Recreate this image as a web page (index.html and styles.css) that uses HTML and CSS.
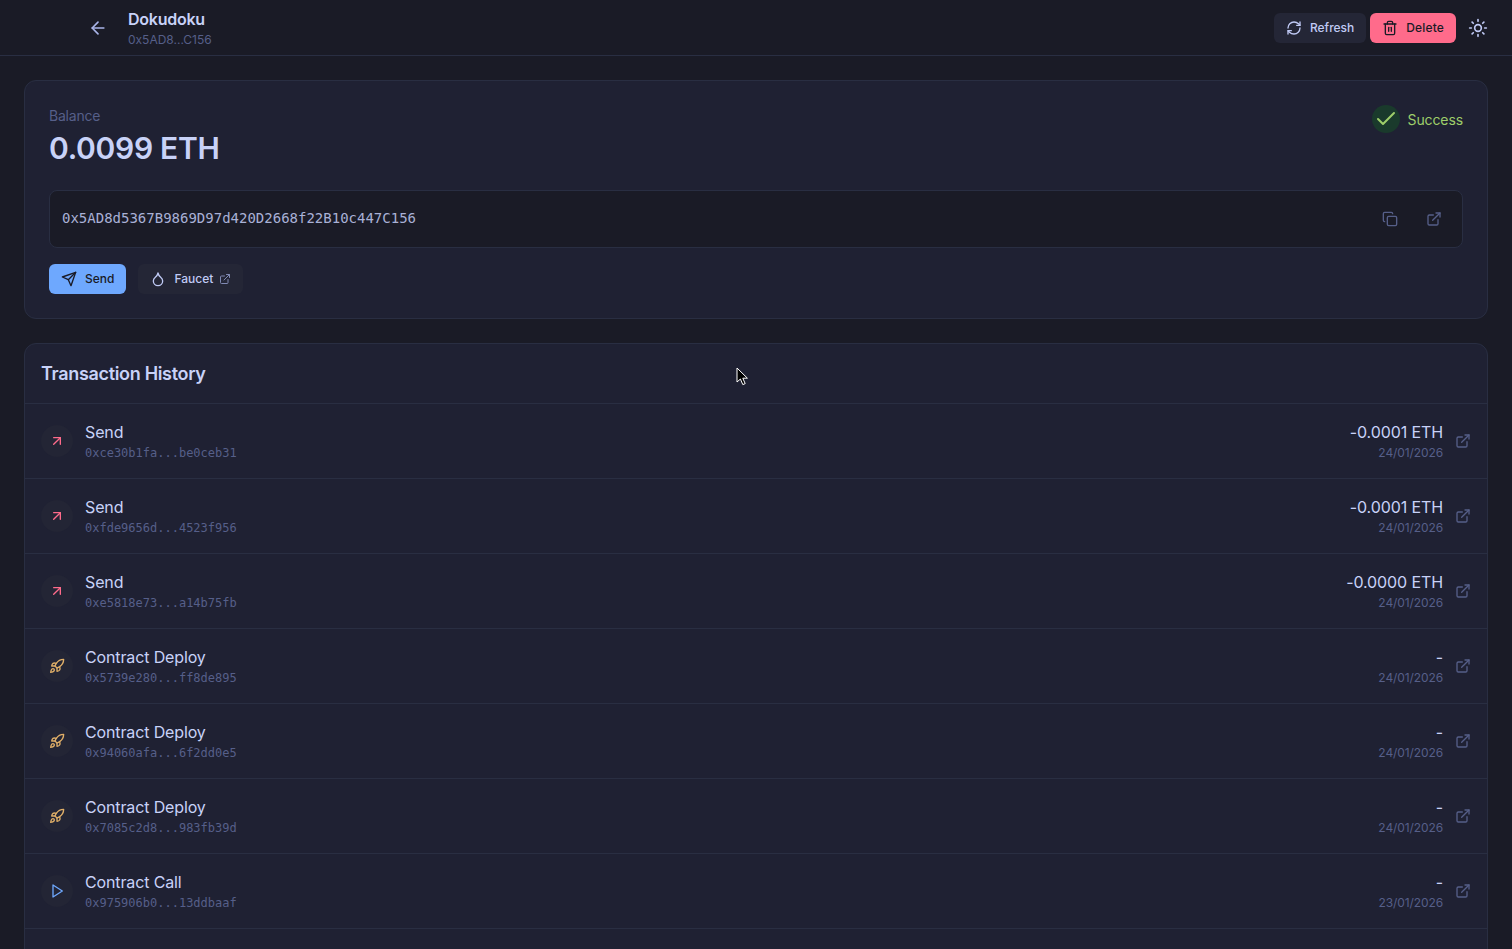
FILE: index.html
```html
<!DOCTYPE html>
<html lang="en">
<head>
<meta charset="utf-8">
<title>Dokudoku</title>
<link rel="stylesheet" href="styles.css">
</head>
<body>
<svg class="sprite" width="0" height="0" aria-hidden="true">
  <defs>
    <symbol id="i-ext" viewBox="0 0 24 24"><path d="M18 13v6a2 2 0 0 1-2 2H5a2 2 0 0 1-2-2V8a2 2 0 0 1 2-2h6"/><path d="M15 3h6v6"/><path d="M10 14 21 3"/></symbol>
    <symbol id="i-up" viewBox="0 0 24 24"><path d="M7 7h10v10"/><path d="M7 17 17 7"/></symbol>
    <symbol id="i-rocket" viewBox="0 0 24 24"><path d="M4.5 16.5c-1.5 1.26-2 5-2 5s3.74-.5 5-2c.71-.84.7-2.13-.09-2.91a2.18 2.18 0 0 0-2.91-.09z"/><path d="m12 15-3-3a22 22 0 0 1 2-3.95A12.88 12.88 0 0 1 22 2c0 2.72-.78 7.5-6 11a22.35 22.35 0 0 1-4 2z"/><path d="M9 12H4s.55-3.03 2-4c1.62-1.08 5 0 5 0"/><path d="M12 15v5s3.03-.55 4-2c1.08-1.62 0-5 0-5"/></symbol>
    <symbol id="i-play" viewBox="0 0 24 24"><polygon points="6 3 20 12 6 21 6 3"/></symbol>
  </defs>
</svg>
<div class="app">
  <header class="topbar">
    <svg class="ic back" viewBox="0 0 24 24"><path d="M19 12H5"/><path d="m12 19-7-7 7-7"/></svg>
    <div class="title-block">
      <div class="title">Dokudoku</div>
      <div class="subtitle">0x5AD8...C156</div>
    </div>
    <div class="top-actions">
      <button class="btn btn-ghost"><svg class="ic btn-ic" viewBox="0 0 24 24"><path d="M3 12a9 9 0 0 1 9-9 9.75 9.75 0 0 1 6.74 2.74L21 8"/><path d="M21 3v5h-5"/><path d="M21 12a9 9 0 0 1-9 9 9.75 9.75 0 0 1-6.74-2.74L3 16"/><path d="M8 16H3v5"/></svg>Refresh</button>
      <button class="btn btn-danger"><svg class="ic btn-ic" viewBox="0 0 24 24"><path d="M3 6h18"/><path d="M19 6v14c0 1-1 2-2 2H7c-1 0-2-1-2-2V6"/><path d="M8 6V4c0-1 1-2 2-2h4c1 0 2 1 2 2v2"/><path d="M10 11v6"/><path d="M14 11v6"/></svg>Delete</button>
      <svg class="ic sun" viewBox="0 0 24 24"><circle cx="12" cy="12" r="4"/><path d="M12 2v2"/><path d="M12 20v2"/><path d="m4.93 4.93 1.41 1.41"/><path d="m17.66 17.66 1.41 1.41"/><path d="M2 12h2"/><path d="M20 12h2"/><path d="m6.34 17.66-1.41 1.41"/><path d="m19.07 4.93-1.41 1.41"/></svg>
    </div>
  </header>
  <main class="content">
    <section class="card balance-card">
      <div class="balance-head">
        <div>
          <div class="balance-label">Balance</div>
          <div class="balance-value">0.0099 ETH</div>
        </div>
        <div class="status">
          <span class="status-dot"><svg class="ic" viewBox="0 0 24 24"><path d="M20 6 9 17l-5-5"/></svg></span>
          <span class="status-text">Success</span>
        </div>
      </div>
      <div class="address-box">
        <span class="address">0x5AD8d5367B9869D97d420D2668f22B10c447C156</span>
        <svg class="ic addr-ic" viewBox="0 0 24 24"><rect x="8" y="8" width="14" height="14" rx="2"/><path d="M4 16c-1.1 0-2-.9-2-2V4c0-1.1.9-2 2-2h10c1.1 0 2 .9 2 2"/></svg>
        <svg class="ic addr-ic"><use href="#i-ext"/></svg>
      </div>
      <div class="balance-actions">
        <button class="btn btn-primary"><svg class="ic btn-ic" viewBox="0 0 24 24"><path d="m22 2-7 20-4-9-9-4Z"/><path d="M22 2 11 13"/></svg>Send</button>
        <button class="btn btn-ghost"><svg class="ic btn-ic" viewBox="0 0 24 24"><path d="M12 22a7 7 0 0 0 7-7c0-2-1-3.9-3-5.5s-3.5-4-4-6.5c-.5 2.5-2 4.9-4 6.5C6 11.1 5 13 5 15a7 7 0 0 0 7 7z"/></svg>Faucet<svg class="ic faucet-ext"><use href="#i-ext"/></svg></button>
      </div>
    </section>
    <section class="card history-card">
      <h2 class="history-title">Transaction History</h2>
      <div class="tx">
        <span class="tx-icon tx-send"><svg class="ic"><use href="#i-up"/></svg></span>
        <div class="tx-main"><div class="tx-name">Send</div><div class="tx-hash">0xce30b1fa...be0ceb31</div></div>
        <div class="tx-side"><div class="tx-amount">-0.0001 ETH</div><div class="tx-date">24/01/2026</div></div>
        <svg class="ic tx-link"><use href="#i-ext"/></svg>
      </div>
      <div class="tx">
        <span class="tx-icon tx-send"><svg class="ic"><use href="#i-up"/></svg></span>
        <div class="tx-main"><div class="tx-name">Send</div><div class="tx-hash">0xfde9656d...4523f956</div></div>
        <div class="tx-side"><div class="tx-amount">-0.0001 ETH</div><div class="tx-date">24/01/2026</div></div>
        <svg class="ic tx-link"><use href="#i-ext"/></svg>
      </div>
      <div class="tx">
        <span class="tx-icon tx-send"><svg class="ic"><use href="#i-up"/></svg></span>
        <div class="tx-main"><div class="tx-name">Send</div><div class="tx-hash">0xe5818e73...a14b75fb</div></div>
        <div class="tx-side"><div class="tx-amount">-0.0000 ETH</div><div class="tx-date">24/01/2026</div></div>
        <svg class="ic tx-link"><use href="#i-ext"/></svg>
      </div>
      <div class="tx">
        <span class="tx-icon tx-deploy"><svg class="ic"><use href="#i-rocket"/></svg></span>
        <div class="tx-main"><div class="tx-name">Contract Deploy</div><div class="tx-hash">0x5739e280...ff8de895</div></div>
        <div class="tx-side"><div class="tx-amount">-</div><div class="tx-date">24/01/2026</div></div>
        <svg class="ic tx-link"><use href="#i-ext"/></svg>
      </div>
      <div class="tx">
        <span class="tx-icon tx-deploy"><svg class="ic"><use href="#i-rocket"/></svg></span>
        <div class="tx-main"><div class="tx-name">Contract Deploy</div><div class="tx-hash">0x94060afa...6f2dd0e5</div></div>
        <div class="tx-side"><div class="tx-amount">-</div><div class="tx-date">24/01/2026</div></div>
        <svg class="ic tx-link"><use href="#i-ext"/></svg>
      </div>
      <div class="tx">
        <span class="tx-icon tx-deploy"><svg class="ic"><use href="#i-rocket"/></svg></span>
        <div class="tx-main"><div class="tx-name">Contract Deploy</div><div class="tx-hash">0x7085c2d8...983fb39d</div></div>
        <div class="tx-side"><div class="tx-amount">-</div><div class="tx-date">24/01/2026</div></div>
        <svg class="ic tx-link"><use href="#i-ext"/></svg>
      </div>
      <div class="tx">
        <span class="tx-icon tx-call"><svg class="ic"><use href="#i-play"/></svg></span>
        <div class="tx-main"><div class="tx-name">Contract Call</div><div class="tx-hash">0x975906b0...13ddbaaf</div></div>
        <div class="tx-side"><div class="tx-amount">-</div><div class="tx-date">23/01/2026</div></div>
        <svg class="ic tx-link"><use href="#i-ext"/></svg>
      </div>
      <div class="tx"></div>
    </section>
  </main>
</div>
<svg class="cursor" width="12" height="19" viewBox="0 0 12 19"><path d="M1 1v14l3.4-3 2.4 5.6 2.4-1-2.4-5.4h4.6z" fill="#000" stroke="#fff" stroke-width="1"/></svg>
</body>
</html>
```
FILE: styles.css
```css
* { box-sizing: border-box; }
html, body { margin: 0; height: 100%; }
body {
  background: #1a1b26;
  color: #c8d2f8;
  font-family: Inter, "Liberation Sans", sans-serif;
  overflow: hidden;
  height: 949px;
}
.sprite { position: absolute; }
.ic {
  fill: none;
  stroke: currentColor;
  stroke-width: 2;
  stroke-linecap: round;
  stroke-linejoin: round;
  flex: none;
  display: block;
}
.topbar {
  height: 56px;
  border-bottom: 1px solid #292e42;
  display: flex;
  align-items: center;
  padding: 0 24px 0 88px;
}
.back { width: 20px; height: 20px; color: #a9b4e8; margin-right: 20px; }
.title-block { padding-top: 1px; }
.title { font-size: 16px; font-weight: 600; line-height: 20px; letter-spacing: -0.25px; }
.subtitle { font-size: 12px; line-height: 16px; color: #565f89; margin-top: 3px; }
.top-actions { margin-left: auto; display: flex; align-items: center; gap: 4px; }
.btn {
  height: 30px;
  display: inline-flex;
  align-items: center;
  gap: 8px;
  padding: 0 12px;
  border: 0;
  border-radius: 6px;
  font-family: inherit;
  font-size: 12px;
  font-weight: 500;
  line-height: 14px;
}
.btn-ic { width: 16px; height: 16px; }
.btn-ghost { background: #242636; color: #c0caf5; }
.btn-danger { background: #ff6b8b; color: #1a1b26; letter-spacing: 0.15px; }
.btn-primary { background: #6ea8fe; color: #1a1b26; }
.sun { width: 20px; height: 20px; color: #c0caf5; margin-left: 8px; }
.content { padding: 24px; display: flex; flex-direction: column; gap: 24px; }
.card { background: #1f2133; border: 1px solid #292e42; border-radius: 12px; }
.balance-card { padding: 24px; height: 239px; }
.balance-head { display: flex; justify-content: space-between; align-items: flex-start; height: 85px; }
.balance-label { font-size: 14px; line-height: 20px; color: #565f89; letter-spacing: -0.2px; margin-top: 1px; }
.balance-value { font-size: 30px; font-weight: 600; line-height: 36px; margin-top: 4px; letter-spacing: -0.3px; }
.status { display: flex; align-items: center; gap: 8px; }
.status-dot {
  width: 28px; height: 28px;
  border-radius: 50%;
  background: #1a3a2c;
  color: #9ece6a;
  display: flex;
  align-items: center;
  justify-content: center;
}
.status-dot .ic { width: 24px; height: 24px; }
.status-text { font-size: 14px; color: #9ece6a; letter-spacing: -0.1px; }
.address-box {
  height: 58px;
  background: #1a1b26;
  border: 1px solid #292e42;
  border-radius: 8px;
  padding: 0 20px 0 12px;
  display: flex;
  align-items: center;
  gap: 28px;
}
.address { font-family: "DejaVu Sans Mono", "Liberation Mono", monospace; font-size: 14px; color: #a9b1d6; margin-right: auto; padding-bottom: 2px; }
.addr-ic { width: 16px; height: 16px; color: #565f89; }
.balance-actions { display: flex; gap: 12px; margin-top: 16px; }
.faucet-ext { width: 12px; height: 12px; color: #8089b3; margin-left: -2px; }
.history-card { overflow: hidden; }
.history-title { margin: 0; font-size: 18px; font-weight: 600; line-height: 28px; padding: 16px 16px 15px; letter-spacing: -0.32px; }
.tx {
  height: 75px;
  border-top: 1px solid #292e42;
  display: flex;
  align-items: center;
  padding: 0 16px;
  gap: 12px;
}
.tx-icon {
  width: 32px; height: 32px;
  border-radius: 50%;
  background: #232535;
  display: flex;
  align-items: center;
  justify-content: center;
}
.tx-icon .ic { width: 16px; height: 16px; }
.tx-send { color: #ff6b8b; }
.tx-deploy { color: #e0af68; }
.tx-call { color: #6ea8fe; }
.tx-main { flex: 1; padding-bottom: 2px; }
.tx-name { font-size: 16px; line-height: 24px; letter-spacing: -0.13px; }
.tx-hash { font-family: "DejaVu Sans Mono", "Liberation Mono", monospace; font-size: 12px; line-height: 16px; color: #565f89; margin-top: 1px; }
.tx-side { text-align: right; padding-bottom: 2px; }
.tx-amount { font-size: 16px; line-height: 24px; letter-spacing: -0.1px; }
.tx-date { font-size: 12px; line-height: 16px; color: #565f89; margin-top: 1px; letter-spacing: -0.1px; }
.tx-link { width: 16px; height: 16px; color: #565f89; }
.cursor { position: absolute; left: 736px; top: 367px; }
```
